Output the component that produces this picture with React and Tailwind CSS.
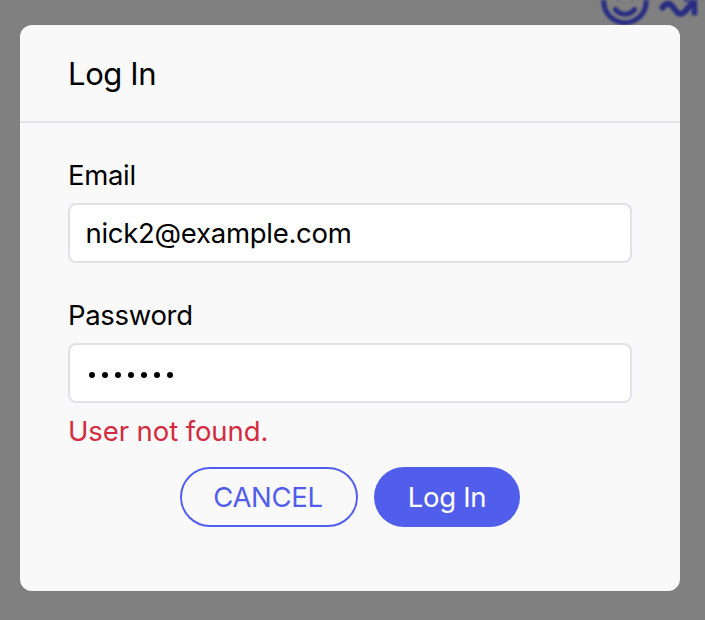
function BackdropIcons() {
  return (
    <svg
      className="absolute top-0 right-0 blur-[1.2px]"
      width="105"
      height="30"
      viewBox="600 0 105 30"
      fill="none"
      stroke="#292d83"
      strokeLinecap="round"
      strokeLinejoin="round"
    >
      <circle cx="625" cy="1.5" r="21.2" strokeWidth="5" />
      <path d="M615.500 9.500c4.500 6.200 14.500 6.200 19 0" strokeWidth="5" />
      <path d="M618 -1.500h.1M632 -1.500h.1" strokeWidth="4" />
      <path d="M662.500 7.500c3-4.500 7-5 10-1l4 5c2.500 3.200 5.500 3.200 8.500 0L694 1" strokeWidth="6" />
      <path d="M694.500 15.500V-2M684 -1h11" strokeWidth="5.500" strokeLinecap="butt" />
    </svg>
  );
}

function Field({ label, type, value }) {
  return (
    <label className="block">
      <span className="block h-[45px] text-[27.500px] leading-[35px] tracking-[-0.320px]">{label}</span>
      {type === "password" ? (
        <span className="flex h-15 items-center gap-[7px] rounded-lg border-2 border-[#e2e1e8] bg-white pt-1 pl-[19px]">
          {Array.from(value).map((_, i) => (
            <span key={i} className="size-1.5 rounded-full bg-black" />
          ))}
        </span>
      ) : (
        <input
          type={type}
          defaultValue={value}
          className="block h-15 w-full rounded-lg border-2 border-[#e2e1e8] bg-white px-[15.500px] text-[27.500px] tracking-[-0.280px] outline-none"
        />
      )}
    </label>
  );
}

export default function App() {
  return (
    <div className="relative h-[620px] w-[705px] overflow-hidden bg-[#808080] pt-[25px] pl-5 font-['Inter',sans-serif] text-black">
      <BackdropIcons />
      <section className="relative h-[566px] w-[660px] rounded-xl bg-[#f9f9f9]">
        <header className="h-[98px] border-b-2 border-[#e2e1e5] px-12 pt-[29px]">
          <h1 className="text-[31px] leading-10 tracking-[-0.400px]">Log In</h1>
        </header>
        <form className="px-12 pt-[35px]" onSubmit={(e) => e.preventDefault()}>
          <div className="flex flex-col gap-[35px]">
            <Field label="Email" type="email" value="nick2@example.com" />
            <Field label="Password" type="password" value="secret1" />
          </div>
          <p className="mt-[11px] text-[27.500px] leading-[35px] tracking-[-0.100px] text-[#d42b41]">User not found.</p>
          <div className="mt-[18px] flex justify-center gap-4">
            <button type="button" className="h-15 w-[178px] rounded-full border-2 border-[#515eec] pt-px pr-[2px] text-[27.500px] tracking-[-0.300px] text-[#515eec]">
              CANCEL
            </button>
            <button type="submit" className="h-15 w-[146px] rounded-full bg-[#515eec] pt-px text-[27.500px] tracking-[-0.300px] text-white">
              Log In
            </button>
          </div>
        </form>
      </section>
    </div>
  );
}
